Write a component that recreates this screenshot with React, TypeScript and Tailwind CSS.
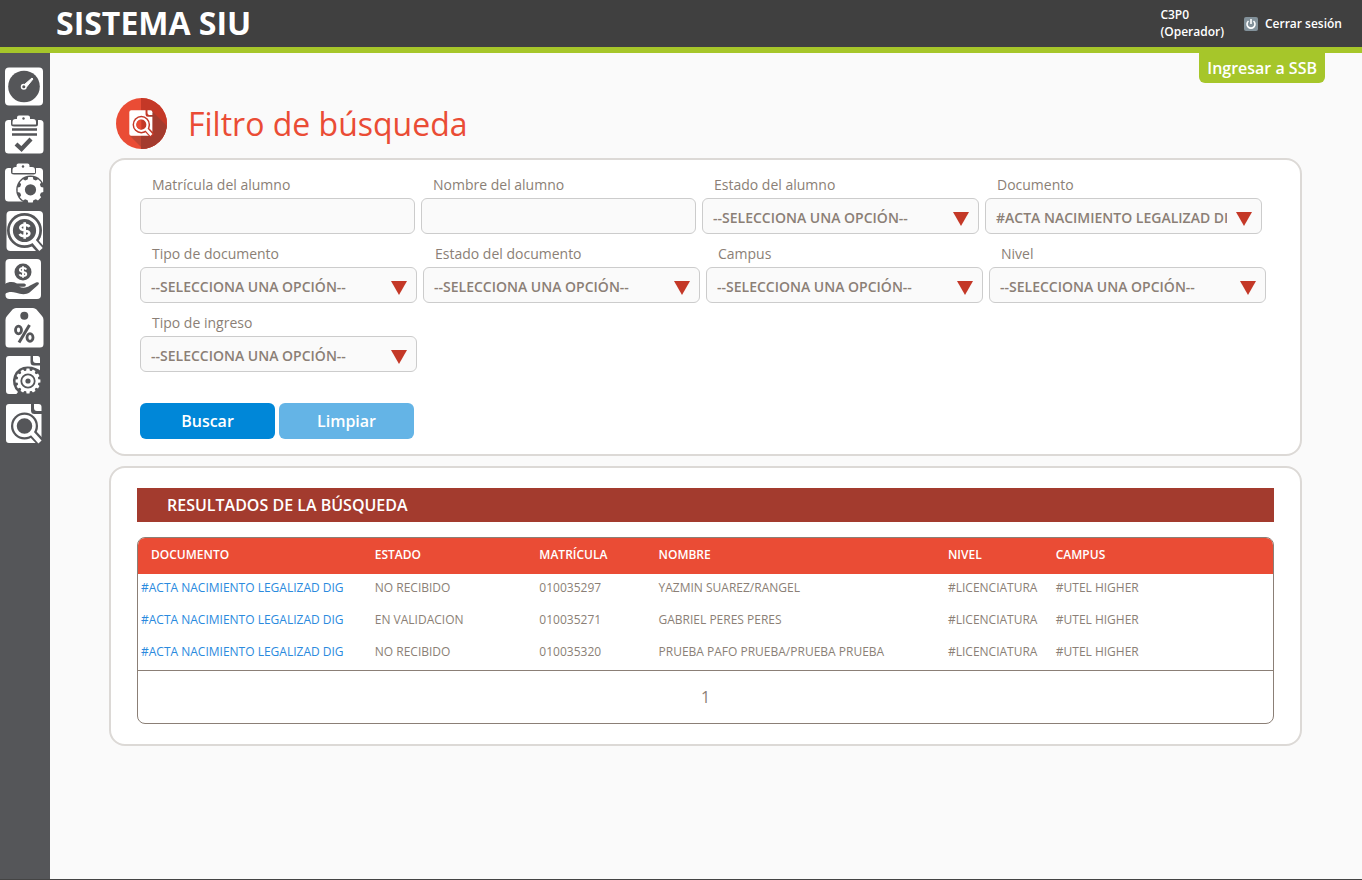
import type { ReactNode } from 'react';

const DARK = '#555659';
const PLACEHOLDER = '--SELECCIONA UNA OPCIÓN--';

type Field = { id: string; label: string; kind: 'text' | 'select'; value?: string };

const FIELDS: Field[] = [
  { id: 'matricula', label: 'Matrícula del alumno', kind: 'text' },
  { id: 'nombre', label: 'Nombre del alumno', kind: 'text' },
  { id: 'estado-alumno', label: 'Estado del alumno', kind: 'select' },
  { id: 'documento', label: 'Documento', kind: 'select', value: '#ACTA NACIMIENTO LEGALIZAD DIG' },
  { id: 'tipo-documento', label: 'Tipo de documento', kind: 'select' },
  { id: 'estado-documento', label: 'Estado del documento', kind: 'select' },
  { id: 'campus', label: 'Campus', kind: 'select' },
  { id: 'nivel', label: 'Nivel', kind: 'select' },
  { id: 'tipo-ingreso', label: 'Tipo de ingreso', kind: 'select' },
];

const RESULTS = [
  { estado: 'NO RECIBIDO', matricula: '010035297', nombre: 'YAZMIN SUAREZ/RANGEL' },
  { estado: 'EN VALIDACION', matricula: '010035271', nombre: 'GABRIEL PERES PERES' },
  { estado: 'NO RECIBIDO', matricula: '010035320', nombre: 'PRUEBA PAFO PRUEBA/PRUEBA PRUEBA' },
];

// Gear outline with square teeth around a center point
function gearPath(cx: number, cy: number, outer: number, inner: number, teeth: number) {
  const step = (Math.PI * 2) / teeth;
  const points: string[] = [];
  for (let i = 0; i < teeth; i++) {
    const a = i * step;
    const corners = [
      [inner, -0.34],
      [outer, -0.22],
      [outer, 0.22],
      [inner, 0.34],
    ];
    corners.forEach(([r, t]) => {
      points.push(`${(cx + r * Math.cos(a + t * step)).toFixed(2)} ${(cy + r * Math.sin(a + t * step)).toFixed(2)}`);
    });
  }
  return `M${points.join('L')}Z`;
}

function Dollar({ x, y, color, s }: { x: number; y: number; color: string; s: number }) {
  return (
    <path
      transform={`translate(${x} ${y}) scale(${s})`}
      d="M4.5 -3.4C3.6 -5 1.8 -5.3 0 -5.3C-2.8 -5.3 -4.2 -4.2 -4.2 -2.6C-4.2 1 4.4 -1 4.4 2.7C4.4 4.4 2.8 5.4 0 5.4C-2.2 5.4 -4 4.8 -4.8 3.2M0 -7.8V7.8"
      fill="none"
      stroke={color}
      strokeWidth="2.5"
    />
  );
}

function PageSearch({ cut }: { cut: string }) {
  return (
    <>
      <path d="M5 2H27V8.500Q27 12 30.500 12H37.500V38.500Q37.500 41 35 41H5Q2 41 2 38V5Q2 2 5 2Z" fill="#fff" />
      <path d="M30 2H34.500Q37.500 2 37.500 5V9H33Q30 9 30 6Z" fill="#fff" />
      <path d="M28 31L37.500 41" stroke={cut} strokeWidth="8.500" />
      <circle cx="20.500" cy="24" r="13.500" fill={cut} />
      <path d="M27 30L36 40" stroke="#fff" strokeWidth="4.200" />
      <circle cx="20.500" cy="24" r="9.500" fill={cut} stroke="#fff" strokeWidth="3.500" />
    </>
  );
}

const MENU: { label: string; art: ReactNode }[] = [
  {
    label: 'Tablero',
    art: (
      <>
        <rect x="1" y="1.500" width="38" height="38" rx="4" fill="#fff" />
        <circle cx="20" cy="20.500" r="15.800" fill={DARK} />
        <path d="M20.500 18.500L28 12L29 13L22.500 21Z" fill="#fff" stroke="#fff" strokeLinejoin="round" />
        <circle cx="19.800" cy="20.700" r="2.300" fill={DARK} stroke="#fff" strokeWidth="1.500" />
      </>
    ),
  },
  {
    label: 'Solicitudes',
    art: (
      <>
        <rect x="1" y="6" width="38.500" height="33.500" rx="3.500" fill="#fff" />
        <path d="M7 5H34V10Q34 12.500 31.500 12.500H10Q7 12.500 7 10Z" fill={DARK} />
        <path d="M8.500 10.500V8Q8.500 5 11.500 5H13V3.500Q13 1.500 15 1.500H24Q26 1.500 26 3.500V5H29Q32 5 32 8V10.500Z" fill="#fff" />
        <circle cx="19.500" cy="4.500" r="1.200" fill={DARK} />
        <path d="M8 15.500H33M8 20.500H33" stroke={DARK} strokeWidth="2.300" />
        <path d="M12 30L17.500 35L27 25" stroke={DARK} strokeWidth="4.200" fill="none" />
      </>
    ),
  },
  {
    label: 'Configuración de solicitudes',
    art: (
      <>
        <rect x="1" y="6" width="38" height="33.500" rx="3.500" fill="#fff" />
        <path d="M7 5H32V10Q32 12.500 29.500 12.500H10Q7 12.500 7 10Z" fill={DARK} />
        <path d="M8.500 11V8Q8.500 5 11.500 5H12.500V3.500Q12.500 1.500 14.500 1.500H23.500Q25.500 1.500 25.500 3.500V5H28Q31 5 31 8V11Z" fill="#fff" />
        <circle cx="19" cy="4.500" r="1.200" fill={DARK} />
        <circle cx="26.500" cy="27.800" r="14.300" fill={DARK} />
        <path d="M30 41L40 30V41Z" fill={DARK} />
        <path d={gearPath(26.5, 27.8, 13, 10.8, 8)} fill="#fff" />
        <circle cx="26.500" cy="27.800" r="5.600" fill={DARK} />
      </>
    ),
  },
  {
    label: 'Consulta de pagos',
    art: (
      <>
        <rect x="2.500" y="1" width="36.500" height="40" rx="4" fill="#fff" />
        <path d="M29 31L38.500 41.500" stroke={DARK} strokeWidth="9" />
        <circle cx="20.500" cy="20.500" r="17.500" fill={DARK} />
        <path d="M28 29L37 39.500" stroke="#fff" strokeWidth="4.500" />
        <circle cx="20.500" cy="20.500" r="13.200" fill={DARK} stroke="#fff" strokeWidth="3.200" />
        <Dollar x={20.7} y={20.5} color="#fff" s={1.05} />
      </>
    ),
  },
  {
    label: 'Cobranza',
    art: (
      <>
        <rect x="1.500" y="1" width="35.500" height="40" rx="4" fill="#fff" />
        <circle cx="19" cy="14" r="8.500" fill={DARK} />
        <Dollar x={19} y={14} color="#fff" s={0.75} />
        <path
          d="M1 26C5 23.500 9 23.500 13 25.500H20C22.500 25.500 22.500 28.500 20 28.800H15C20 30.500 23 29.500 26 27.500L32 24.500C34.500 23.500 36 25 34 27L25.500 34.500C22 37 17 36.500 12 34.800C7.500 33.500 4 34 1 36Z"
          fill={DARK}
        />
      </>
    ),
  },
  {
    label: 'Descuentos',
    art: (
      <>
        <path d="M12 2H29Q31 2 32.500 3.500L38 10Q39.500 11.500 39.500 14V38Q39.500 41.500 36 41.500H5Q1.500 41.500 1.500 38V14Q1.500 11.500 3 10L8.500 3.500Q10 2 12 2Z" fill="#fff" />
        <circle cx="20.300" cy="9.800" r="4" fill={DARK} />
        <ellipse cx="14.500" cy="24" rx="3" ry="3.800" fill="none" stroke={DARK} strokeWidth="2.800" />
        <ellipse cx="26" cy="31.500" rx="3" ry="3.800" fill="none" stroke={DARK} strokeWidth="2.800" />
        <path d="M25.500 19L15 36.500" stroke={DARK} strokeWidth="3" />
      </>
    ),
  },
  {
    label: 'Configuración de documentos',
    art: (
      <>
        <path d="M5 2H26.500V8Q26.500 11.500 30 11.500H36V37Q36 40 33 40H5Q2 40 2 37V5Q2 2 5 2Z" fill="#fff" />
        <path d="M29 2H33.500Q36 2 36 4.500V9H32Q29 9 29 6Z" fill="#fff" />
        <path d="M24 12.500A14.500 14.500 0 0 0 14 38L12 40.500H38V18Q32 12.500 24 12.500Z" fill={DARK} />
        <path d={gearPath(24, 27, 12.5, 10.5, 12)} fill="#fff" />
        <circle cx="24" cy="27" r="6.700" fill="#fff" stroke={DARK} strokeWidth="1.800" />
        <circle cx="24" cy="27" r="2.600" fill={DARK} />
      </>
    ),
  },
  { label: 'Búsqueda de documentos', art: <PageSearch cut={DARK} /> },
];

function SearchBadge() {
  return (
    <svg width="51" height="51" viewBox="0 0 51 51" aria-hidden="true">
      <defs>
        <clipPath id="badge">
          <circle cx="25.500" cy="25.500" r="25.500" />
        </clipPath>
      </defs>
      <g clipPath="url(#badge)">
        <rect width="51" height="51" fill="#ea4c35" />
        <rect x="25" width="26" height="51" fill="#c43827" />
        <path d="M36 13L51 28V51H25V38Z" fill="#a33b2e" />
        <path d="M14 38H25V49Z" fill="#bf4634" />
        <svg x="12" y="11" width="26" height="28" viewBox="0 0 40 43">
          <PageSearch cut="#c43827" />
          <path d="M20.500 16.500A7.500 7.500 0 0 0 20.500 31.500Z" fill="#ea4c35" />
        </svg>
      </g>
    </svg>
  );
}

function FormField({ id, label, kind, value }: Field) {
  return (
    <div className="flex flex-col">
      <label htmlFor={id} className="mb-[3px] pl-3 text-sm">
        {label}
      </label>
      {kind === 'text' ? (
        <input id={id} type="text" className="h-9 w-[275px] rounded-md border border-[#ccc] bg-[#fafafa] px-2.5 text-sm" />
      ) : (
        <div className="relative">
          <select id={id} className="h-9 w-[277px] appearance-none rounded-md border border-[#ccc] bg-[#fafafa] pt-[3px] pr-[34px] pl-2.5 text-sm font-semibold">
            <option>{value ?? PLACEHOLDER}</option>
          </select>
          <svg className="pointer-events-none absolute top-3.5 right-2.5" width="16" height="14" viewBox="0 0 16 14" aria-hidden="true">
            <path d="M0 0H16L8 14Z" fill="#c43827" />
          </svg>
        </div>
      )}
    </div>
  );
}

export default function App() {
  return (
    <div className="flex min-h-screen flex-col border-b border-[#444] bg-[#fafafa] font-['Open_Sans','Noto_Sans',sans-serif] text-[#8b7f76]">
      <header className="relative flex h-[53px] items-center justify-between border-b-6 border-[#a6c62a] bg-[#404040] pr-5 pl-14 text-white">
        <div className="pb-0.5 text-[32px] font-bold">SISTEMA SIU</div>
        <div className="flex items-center gap-5 text-xs font-semibold">
          <div className="pb-0.5 leading-[17px]">
            C3P0
            <br />
            (Operador)
          </div>
          <a href="#salir" className="flex items-center gap-[7px]">
            <svg width="14" height="14" viewBox="0 0 14 14" aria-hidden="true">
              <rect width="14" height="14" rx="2" fill="#82919a" />
              <path d="M4.500 4A4 4 0 1 0 9.500 4M7 2V7" stroke="#fff" strokeWidth="1.600" fill="none" />
            </svg>
            Cerrar sesión
          </a>
        </div>
        <a href="#ssb" className="absolute top-[53px] right-[37px] rounded-b-md bg-[#a6c62a] px-2 py-[3px] text-base font-semibold">
          Ingresar a SSB
        </a>
      </header>

      <div className="flex flex-1">
        <nav className="flex w-[50px] flex-col gap-1.5 bg-[#555659] pt-[13px] pl-1">
          {MENU.map((item) => (
            <a key={item.label} href="#menu" aria-label={item.label} title={item.label}>
              <svg width="40" height="42" viewBox="0 0 40 42" className="block">
                {item.art}
              </svg>
            </a>
          ))}
        </nav>

        <main className="flex-1 pt-[45px] pr-[60px] pl-[59px]">
          <div className="mb-[9px] flex items-center gap-[21px] pl-[7px]">
            <SearchBadge />
            <h1 className="text-[32px] leading-[48px] text-[#ea4c35]">Filtro de búsqueda</h1>
          </div>

          <form className="rounded-2xl border-2 border-[#dcd9d6] bg-white px-[29px] py-[15px]" onSubmit={(e) => e.preventDefault()}>
            <div className="flex flex-wrap gap-x-1.5 gap-y-2.5">
              {FIELDS.map((field) => (
                <FormField key={field.id} {...field} />
              ))}
            </div>
            <div className="mt-[31px] flex gap-1 text-base font-semibold text-white">
              <button type="submit" className="h-9 w-[135px] rounded-md bg-[#0087d8]">
                Buscar
              </button>
              <button type="reset" className="h-9 w-[135px] rounded-md bg-[#64b4e6]">
                Limpiar
              </button>
            </div>
          </form>

          <section className="mt-2.5 rounded-2xl border-2 border-[#dcd9d6] bg-white px-[26px] py-5">
            <h2 className="mb-[15px] bg-[#a33b2e] px-[30px] text-base leading-[34px] font-semibold text-white">RESULTADOS DE LA BÚSQUEDA</h2>
            <div className="overflow-hidden rounded-lg border border-[#8b7f76]">
              <table className="w-full table-fixed text-left text-xs leading-5">
                <thead className="bg-[#ea4c35] text-white">
                  <tr className="h-9 align-top *:px-[3px] *:pt-[7px] *:font-semibold">
                    <th className="w-[20.6%]">
                      <span className="pl-2.5">DOCUMENTO</span>
                    </th>
                    <th className="w-[14.5%]">ESTADO</th>
                    <th className="w-[10.5%]">MATRÍCULA</th>
                    <th className="w-[25.5%]">NOMBRE</th>
                    <th className="w-[9.5%]">NIVEL</th>
                    <th>CAMPUS</th>
                  </tr>
                </thead>
                <tbody>
                  {RESULTS.map((row) => (
                    <tr key={row.matricula} className="h-8 align-top whitespace-nowrap *:px-[3px] *:pt-1">
                      <td>
                        <a href="#documento" className="text-[#2a8ade]">
                          #ACTA NACIMIENTO LEGALIZAD DIG
                        </a>
                      </td>
                      <td>{row.estado}</td>
                      <td>{row.matricula}</td>
                      <td>{row.nombre}</td>
                      <td>#LICENCIATURA</td>
                      <td>#UTEL HIGHER</td>
                    </tr>
                  ))}
                </tbody>
              </table>
              <div className="border-t border-[#8b7f76] text-center text-base leading-[52px]">1</div>
            </div>
          </section>
        </main>
      </div>
    </div>
  );
}
